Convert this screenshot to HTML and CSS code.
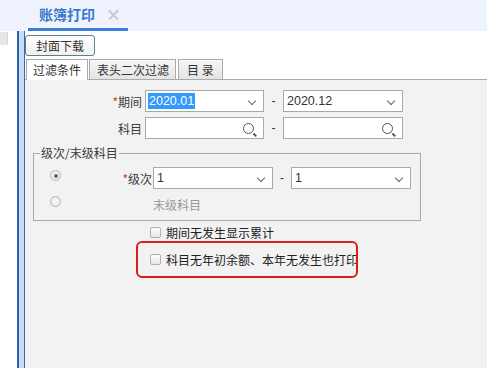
FILE: index.html
```html
<!DOCTYPE html>
<html lang="zh">
<head>
<meta charset="utf-8">
<title>账簿打印</title>
<link rel="stylesheet" href="styles.css">
</head>
<body>
<div class="topbar">
  <div class="doc-tab"><span class="doc-title">账簿打印</span><span class="doc-close"></span></div>
</div>
<div class="main">
  <div class="leftpane"><div class="leftstub"></div></div>
  <div class="splitter"></div>
  <div class="content">
    <div class="toolbar">
      <button class="btn">封面下载</button>
      <div class="tabs">
        <div class="tab active">过滤条件</div>
        <div class="tab">表头二次过滤</div>
        <div class="tab">目 录</div>
      </div>
    </div>
    <div class="panel">
      <div class="row">
        <label class="lbl"><span class="req">*</span>期间</label>
        <div class="field"><span class="sel-text">2020.01</span><span class="chev"></span></div>
        <span class="dash">-</span>
        <div class="field"><span class="val">2020.12</span><span class="chev"></span></div>
      </div>
      <div class="row row2">
        <label class="lbl">科目</label>
        <div class="field"><span class="val"></span><span class="search"></span></div>
        <span class="dash">-</span>
        <div class="field"><span class="val"></span><span class="search"></span></div>
      </div>
      <fieldset class="group">
        <legend class="legend">级次/末级科目</legend>
        <div class="grow">
          <span class="radio checked"></span>
          <label class="glbl"><span class="req">*</span>级次</label>
          <div class="field f2"><span class="val">1</span><span class="chev"></span></div>
          <span class="dash d2">-</span>
          <div class="field f3"><span class="val">1</span><span class="chev"></span></div>
        </div>
        <div class="grow grow2">
          <span class="radio"></span>
          <span class="muted">末级科目</span>
        </div>
      </fieldset>
      <div class="check-row"><span class="checkbox"></span><span>期间无发生显示累计</span></div>
      <div class="highlight">
        <div class="check-row inner"><span class="checkbox"></span><span>科目无年初余额、本年无发生也打印</span></div>
      </div>
    </div>
  </div>
</div>
</body>
</html>
```
FILE: styles.css
```css
* { box-sizing: border-box; }
html, body { margin: 0; height: 100%; }
body {
  font-family: "Noto Sans CJK SC", "Liberation Sans", sans-serif;
  font-size: 12px;
  color: #3a3a3a;
  background: #fff;
  display: flex;
  flex-direction: column;
  overflow: hidden;
}
.topbar {
  height: 31px;
  background: #eef3fd;
  display: flex;
  align-items: flex-end;
  flex-shrink: 0;
}
.doc-tab {
  margin-left: 28px;
  width: 100px;
  height: 31px;
  border-bottom: 3px solid #3d7fd8;
  display: flex;
  align-items: center;
  padding-left: 11px;
}
.doc-title {
  font-size: 14px;
  font-weight: bold;
  color: #3a78d0;
}
.doc-close {
  margin-left: 13px;
  width: 11px;
  height: 11px;
  position: relative;
}
.doc-close::before,
.doc-close::after {
  content: "";
  position: absolute;
  left: -1px;
  top: 5px;
  width: 13px;
  height: 1.5px;
  background: #c6cad1;
  transform: rotate(45deg);
}
.doc-close::after { transform: rotate(-45deg); }
.main {
  flex: 1;
  display: flex;
}
.leftpane {
  width: 17px;
  background: #fff;
}
.leftstub {
  margin-top: 1px;
  width: 8px;
  height: 13px;
  background: #e6e6e6;
  border-right: 1px solid #d8d8d8;
}
.splitter {
  width: 8px;
  border-left: 2px solid #2d5fa8;
  border-right: 1px solid #3c68a8;
  background: #c8dcf8;
}
.content {
  flex: 1;
  display: flex;
  flex-direction: column;
}
.toolbar {
  background: #fff;
  padding-top: 4px;
  border-bottom: 1px solid #aaa;
}
.btn {
  display: block;
  font: inherit;
  font-size: 12px;
  color: #333;
  height: 21px;
  width: 70px;
  padding: 0;
  border: 1px solid #5c7e8e;
  border-radius: 3px;
  background: linear-gradient(#ffffff, #f1f1f1);
  line-height: 19px;
}
.tabs {
  display: flex;
  margin-top: 3px;
  padding-left: 1px;
  height: 20px;
}
.tab {
  height: 20px;
  padding: 0 6px;
  margin-right: 1px;
  border: 1px solid #aaa;
  border-bottom: none;
  background: linear-gradient(#f7f7f7, #e4e4e4);
  line-height: 19px;
  color: #333;
}
.tab:nth-child(2) { padding: 0 6px 0 7px; margin-right: 2px; }
.tab:nth-child(3) { padding: 0 8px; }
.tab.active {
  background: #fff;
  height: 21px;
  margin-bottom: -1px;
  position: relative;
}
.panel {
  flex: 1;
  background: #f2f2f2;
  padding-top: 10px;
}
.row {
  display: flex;
  align-items: center;
  height: 22px;
}
.row2 { margin-top: 5px; }
.lbl {
  width: 120px;
  text-align: right;
  padding-right: 3px;
}
.req { color: #c0392b; }
.field {
  width: 119px;
  height: 22px;
  border: 1px solid #a9a9a9;
  background: #fff;
  display: flex;
  align-items: center;
  position: relative;
  font-family: "Liberation Sans", sans-serif;
  font-size: 12.5px;
  color: #333;
}
.row .field + .dash + .field { width: 120px; }
.sel-text {
  margin-left: 2px;
  background: #3399ff;
  color: #fff;
  padding: 0 1px;
  line-height: 16px;
}
.val { margin-left: 3px; }
.chev {
  position: absolute;
  right: 8px;
  top: 7px;
  width: 6px;
  height: 6px;
  border-right: 1.6px solid #666;
  border-bottom: 1.6px solid #666;
  transform: rotate(45deg);
}
.search {
  position: absolute;
  right: 9px;
  top: 5px;
  width: 11px;
  height: 11px;
  border: 1.6px solid #555;
  border-radius: 50%;
}
.search::after {
  content: "";
  position: absolute;
  right: -4px;
  bottom: -3px;
  width: 4px;
  height: 1.6px;
  background: #555;
  transform: rotate(45deg);
}
.dash {
  width: 19px;
  text-align: center;
  color: #333;
  font-family: "Liberation Sans", sans-serif;
}
.group {
  margin: 7px 0 0 8px;
  width: 388px;
  padding: 0 0 5px 0;
  border: 1px solid #a8a8a8;
  min-width: 0;
}
.legend {
  margin-left: 6px;
  padding: 0 1px;
  line-height: 14px;
}
.grow {
  display: flex;
  align-items: center;
  height: 22px;
  margin-top: 7px;
}
.grow2 { margin-top: 4px; }
.radio {
  width: 11px;
  height: 11px;
  border-radius: 50%;
  border: 1px solid #b4b4b4;
  background: radial-gradient(#fbfbfb, #e2e2e2);
  margin-left: 16px;
  position: relative;
  flex-shrink: 0;
}
.radio.checked { margin-top: -5px; }
.grow2 .radio { margin-top: -6px; }
.radio.checked::after {
  content: "";
  position: absolute;
  left: 2.5px;
  top: 2.5px;
  width: 4px;
  height: 4px;
  border-radius: 50%;
  background: #666;
}
.glbl {
  width: 92px;
  text-align: right;
  padding-right: 1px;
}
.f2 { width: 120px; }
.f3 { width: 120px; }
.d2 { width: 18px; }
.muted {
  margin-left: 92px;
  color: #999;
}
.check-row {
  display: flex;
  align-items: center;
  height: 18px;
  margin-top: 2px;
  padding-left: 125px;
  color: #222;
  white-space: nowrap;
}
.checkbox {
  width: 11px;
  height: 11px;
  border: 1px solid #b0b0b0;
  border-radius: 2px;
  background: linear-gradient(#fdfdfd, #e6e6e6);
  margin-right: 5px;
  flex-shrink: 0;
}
.highlight {
  margin-left: 111px;
  width: 222px;
  height: 37px;
  border: 2px solid #d81e1e;
  border-radius: 6px;
  overflow: hidden;
  display: flex;
  align-items: center;
}
.check-row.inner {
  margin-top: 0;
  padding-left: 12px;
}
```
